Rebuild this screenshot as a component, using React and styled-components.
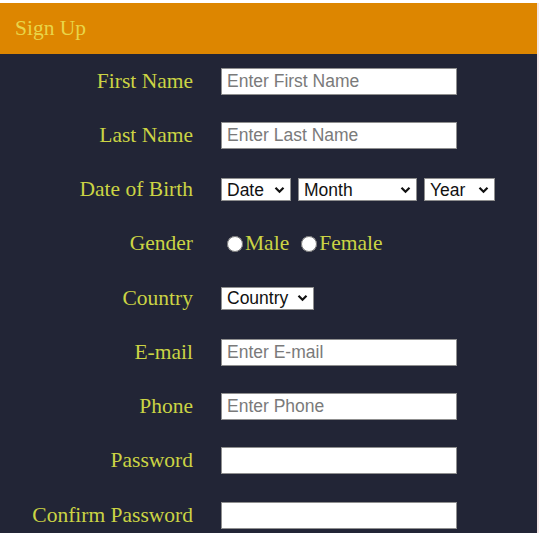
import styled, { createGlobalStyle } from 'styled-components';

const GlobalStyle = createGlobalStyle`
    body {
        margin: 0;
        background: #ffffff;
    }
`;

const Page = styled.div`
    padding-top: 3px;
`;

const Panel = styled.div`
    width: 537px;
    height: 530px;
    background: #222536;
    border-right: 2px solid #f3e6e6;
    overflow: hidden;
`;

const Header = styled.div`
    height: 51px;
    background: #dd8600;
    display: flex;
    align-items: center;
    padding-left: 15px;
    font-family: "Liberation Serif", serif;
    font-size: 21.5px;
    color: #e9d548;
`;

const Form = styled.form`
    display: flex;
    flex-direction: column;
`;

const Row = styled.div`
    height: 54.25px;
    display: grid;
    grid-template-columns: 193px 1fr;
    column-gap: 28px;
    align-items: center;
`;

const Label = styled.label`
    text-align: right;
    font-family: "Liberation Serif", serif;
    font-size: 21.5px;
    color: #cbd444;
    white-space: nowrap;
`;

const Input = styled.input`
    box-sizing: border-box;
    width: 236px;
    height: 27px;
    padding: 0 5px;
    margin: 0;
    border: 1px solid #8f8f8f;
    border-radius: 0;
    background: #ffffff;
    font-family: "Liberation Sans", Arial, sans-serif;
    font-size: 17.5px;
    &::placeholder {
        color: #7a7a7a;
    }
`;

const Selects = styled.div`
    display: flex;
    gap: 7px;
`;

const SelectBox = styled.div`
    position: relative;
    width: ${p => p.$w}px;
    height: 23px;
    svg {
        position: absolute;
        right: 6px;
        top: 50%;
        transform: translateY(-50%);
        pointer-events: none;
    }
`;

const Select = styled.select`
    appearance: none;
    box-sizing: border-box;
    width: 100%;
    height: 100%;
    margin: 0;
    padding: 0 0 0 5px;
    border: 1px solid #8f8f8f;
    border-radius: 0;
    background: #ffffff;
    color: #111;
    font-family: "Liberation Sans", Arial, sans-serif;
    font-size: 17.5px;
`;

const Chevron = () => (
    <svg width="11" height="8" viewBox="0 0 11 8">
        <path d="M1.5 1.8 L5.5 5.8 L9.5 1.8" fill="none" stroke="#111" strokeWidth="2.2" />
    </svg>
);

const Dropdown = ({ w, label }) => (
    <SelectBox $w={w}>
        <Select><option>{label}</option></Select>
        <Chevron />
    </SelectBox>
);

const Radios = styled.div`
    display: flex;
    align-items: center;
    padding-left: 6px;
    font-family: "Liberation Serif", serif;
    font-size: 21.5px;
    color: #cbd444;
`;

const Radio = styled.input`
    width: 16px;
    height: 16px;
    margin: 0 2px 0 0;
`;

const RadioText = styled.span`
    margin-right: 12px;
`;

const App = () => {
    return (
        <Page>
            <GlobalStyle />
            <Panel>
                <Header>Sign Up</Header>
                <Form>
                    <Row>
                        <Label>First Name</Label>
                        <Input placeholder="Enter First Name" />
                    </Row>
                    <Row>
                        <Label>Last Name</Label>
                        <Input placeholder="Enter Last Name" />
                    </Row>
                    <Row>
                        <Label>Date of Birth</Label>
                        <Selects>
                            <Dropdown w={70} label="Date" />
                            <Dropdown w={119} label="Month" />
                            <Dropdown w={71} label="Year" />
                        </Selects>
                    </Row>
                    <Row>
                        <Label>Gender</Label>
                        <Radios>
                            <Radio type="radio" name="gender" />
                            <RadioText>Male</RadioText>
                            <Radio type="radio" name="gender" />
                            <RadioText>Female</RadioText>
                        </Radios>
                    </Row>
                    <Row>
                        <Label>Country</Label>
                        <div>
                            <Dropdown w={93} label="Country" />
                        </div>
                    </Row>
                    <Row>
                        <Label>E-mail</Label>
                        <Input placeholder="Enter E-mail" />
                    </Row>
                    <Row>
                        <Label>Phone</Label>
                        <Input placeholder="Enter Phone" />
                    </Row>
                    <Row>
                        <Label>Password</Label>
                        <Input type="password" />
                    </Row>
                    <Row>
                        <Label>Confirm Password</Label>
                        <Input type="password" />
                    </Row>
                </Form>
            </Panel>
        </Page>
    );
};

export default App;
